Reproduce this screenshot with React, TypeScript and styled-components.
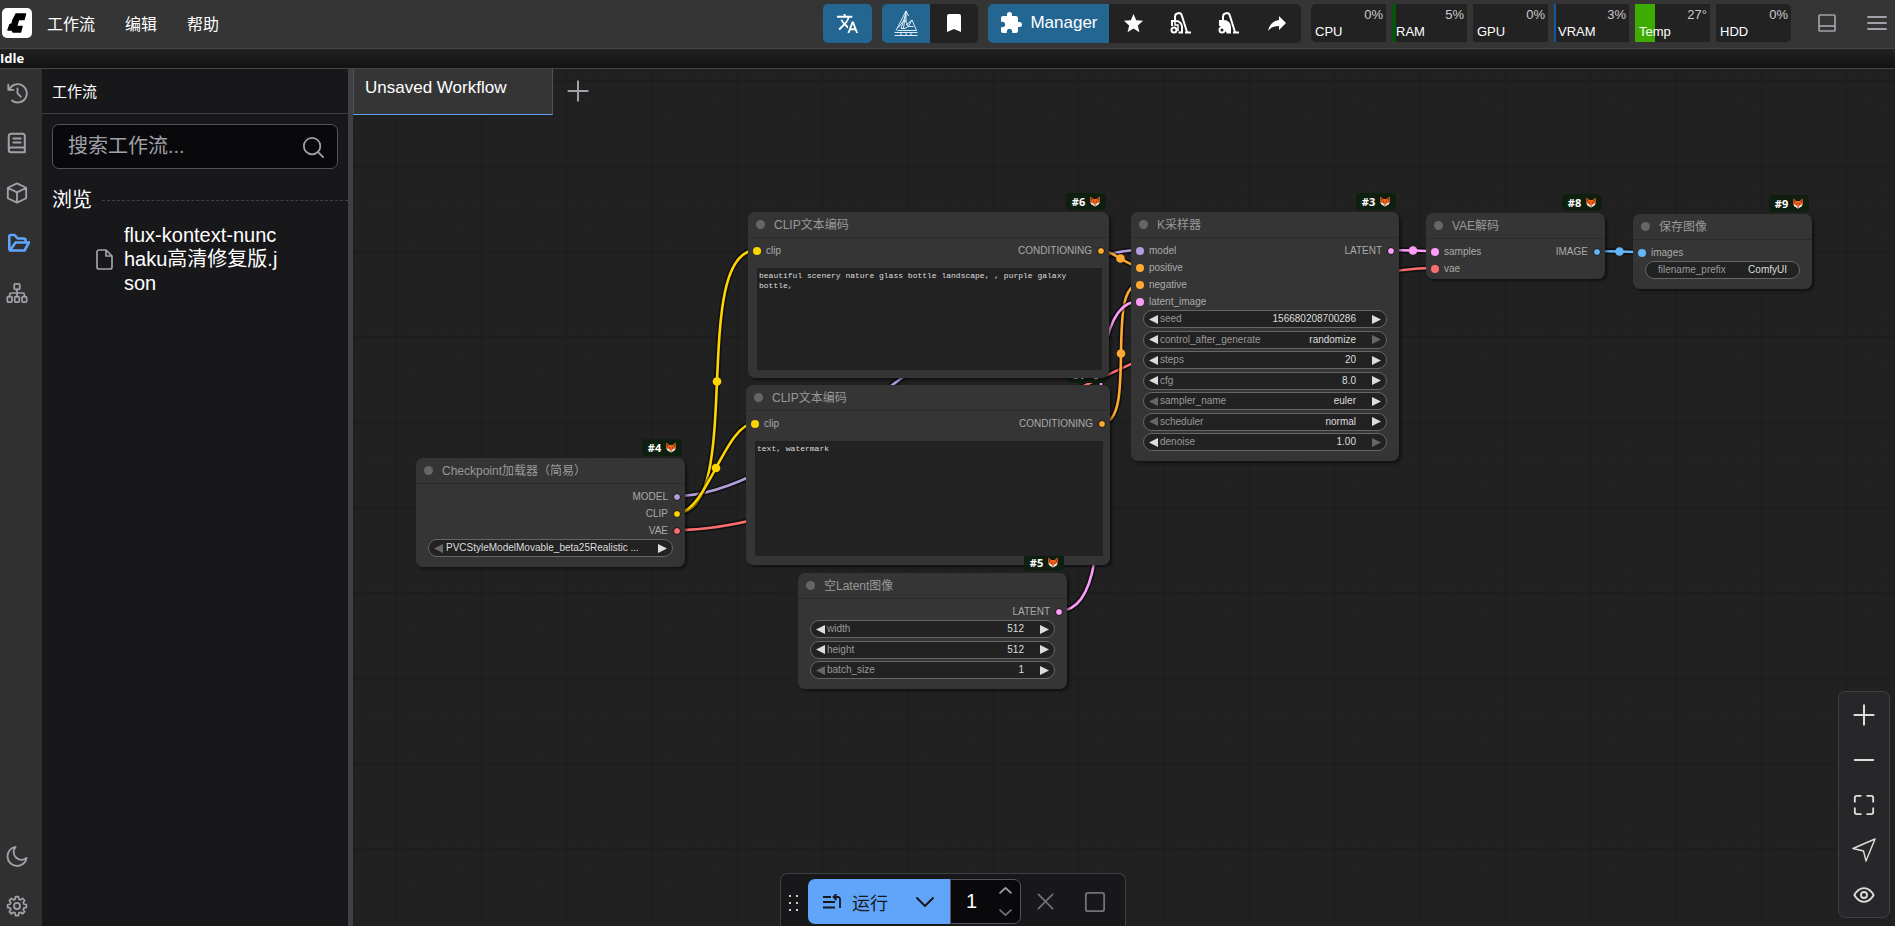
import React from 'react';
import styled, { createGlobalStyle } from 'styled-components';
import { MdTranslate, MdBookmark, MdExtension, MdStar } from 'react-icons/md';

const SANS = '"Liberation Sans", "Noto Sans CJK SC", sans-serif';

const GlobalStyle = createGlobalStyle`
  *, *::before, *::after { box-sizing: border-box; }
  body { margin: 0; background: #202020; color: #fff; font-family: ${SANS}; overflow: hidden; }
  button, input, select, textarea { font: inherit; color: inherit; margin: 0; padding: 0; border: 0; background: none; outline: none; border-radius: 0; }
  button { cursor: pointer; }
  svg { display: block; flex: none; }
`;

/* ---------- shell ---------- */

const Page = styled.div`
  display: flex;
  flex-direction: column;
  height: 100vh;
`;

const TopBar = styled.header`
  display: flex;
  align-items: center;
  flex: none;
  height: 49px;
  padding: 0 8px 6px 2px;
  background: #353535;
  border-bottom: 1px solid #454545;
`;

const Logo = styled.div`
  margin: 4px 0 0;
  border-radius: 5px;
  overflow: hidden;
`;

const MenuNav = styled.nav`
  display: flex;
  gap: 30px;
  margin: 7px auto 0 15px;
`;

const MenuButton = styled.button`
  font-size: 16px;
  line-height: 20px;
`;

const ButtonGroup = styled.div`
  display: flex;
  height: 39px;
  margin: 4px 10px 0 0;
  border-radius: 5px;
  overflow: hidden;
  background: #222;
`;

const BarButton = styled.button<{ $primary?: boolean; $width?: number }>`
  display: flex;
  align-items: center;
  justify-content: center;
  gap: 7px;
  width: ${(p) => p.$width ?? 48}px;
  background: ${(p) => (p.$primary ? '#236692' : 'transparent')};
  font-size: 17px;
`;

const Monitors = styled.div`
  display: flex;
  gap: 6px;
  margin: 3px 27px 0 0;
  border-radius: 5px;
  overflow: hidden;
`;

const Monitor = styled.div`
  position: relative;
  width: 75px;
  height: 38px;
  background: #222;
  font-size: 13px;
  line-height: 15px;
`;

const MonitorFill = styled.div<{ $color: string }>`
  height: 100%;
  background: ${(p) => p.$color};
`;

const MonitorValue = styled.span`
  position: absolute;
  top: 3px;
  right: 3px;
  color: #ccc;
`;

const MonitorLabel = styled.span`
  position: absolute;
  bottom: 3px;
  left: 4px;
`;

const IconButton = styled.button`
  display: flex;
  margin-top: 4px;
  color: #a1a1aa;
  & + & { margin-left: 31px; }
`;

const StatusBar = styled.div`
  flex: none;
  height: 20px;
  background: linear-gradient(#212121, #121212);
  border-bottom: 1px solid #454545;
  font: bold 13px/18px "Open Sans", "Noto Sans CJK SC", sans-serif;
`;

const Main = styled.main`
  display: flex;
  flex: 1;
  min-height: 0;
`;

/* ---------- left side ---------- */

const SideBar = styled.nav`
  display: flex;
  flex-direction: column;
  justify-content: space-between;
  flex: none;
  width: 42px;
  padding-top: 4px;
  background: #303030;
`;

const SideGroup = styled.div`
  display: flex;
  flex-direction: column;
  gap: 10px;
`;

const SideButton = styled.button<{ $active?: boolean }>`
  display: flex;
  align-items: center;
  width: 42px;
  height: 40px;
  padding-left: 6px;
  color: ${(p) => (p.$active ? '#60a5fa' : '#a1a1aa')};
`;

const Panel = styled.aside`
  flex: none;
  width: 311px;
  background: #18181b;
  border-right: 5px solid #3f3f46;
`;

const PanelTitle = styled.h2`
  margin: 0;
  height: 45px;
  padding-left: 10px;
  border-bottom: 1px solid #3f3f46;
  font-size: 15px;
  font-weight: 400;
  line-height: 46px;
`;

const SearchBox = styled.label`
  display: flex;
  align-items: center;
  height: 45px;
  margin: 10px 10px 0;
  padding: 0 13px 0 15px;
  border: 1px solid #52525b;
  border-radius: 7px;
  background: #09090b;
  color: #a1a1aa;
`;

const SearchInput = styled.input`
  flex: 1;
  min-width: 0;
  font-size: 20px;
  &::placeholder { color: #a1a1aa; opacity: 1; }
`;

const SectionTitle = styled.h3`
  display: flex;
  align-items: center;
  gap: 10px;
  margin: 17px 0 0 10px;
  font-size: 20px;
  font-weight: 400;
  line-height: 28px;
  &::after { content: ''; flex: 1; border-top: 1px dashed #3f3f46; }
`;

const FileLink = styled.a`
  display: flex;
  align-items: center;
  gap: 11px;
  margin: 9px 0 0 54px;
  color: #fff;
  font-size: 20px;
  line-height: 24px;
  text-decoration: none;
`;

const FileName = styled.span`
  width: 156px;
  word-break: break-all;
`;

/* ---------- canvas ---------- */

const Canvas = styled.section`
  position: relative;
  flex: 1;
  min-width: 0;
  overflow: hidden;
  background: #212121;
`;

const Layer = styled.svg`
  position: absolute;
  inset: 0;
  width: 100%;
  height: 100%;
`;

const TabBar = styled.div`
  position: relative;
  display: flex;
  align-items: center;
  gap: 14px;
`;

const Tab = styled.button`
  width: 200px;
  height: 46px;
  padding: 0 11px 7px;
  background: #353535;
  border: 1px solid #52525b;
  border-top: 0;
  border-bottom-color: #60a5fa;
  font-size: 17px;
  text-align: left;
`;

const AddTab = styled.button`
  padding-bottom: 2px;
  color: #a1a1aa;
`;

const NodeFrame = styled.article<{ $x: number; $y: number; $w: number; $pad: number }>`
  position: absolute;
  left: ${(p) => p.$x}px;
  top: ${(p) => p.$y}px;
  width: ${(p) => p.$w}px;
  padding-bottom: ${(p) => p.$pad}px;
  border-radius: 7px;
  background: #353535;
  box-shadow: 2px 2px 3px rgba(0, 0, 0, 0.5);
`;

const NodeTitle = styled.h4`
  display: flex;
  align-items: center;
  gap: 9px;
  margin: 0;
  height: 26px;
  padding-left: 8px;
  border-bottom: 1px solid #2c2c2c;
  color: #999;
  font-size: 12px;
  font-weight: 400;
  line-height: 18px;
  &::before { content: ''; width: 9px; height: 9px; border-radius: 50%; background: #666; }
`;

const Badge = styled.span`
  position: absolute;
  right: 3px;
  top: -19px;
  display: flex;
  align-items: center;
  justify-content: center;
  gap: 5px;
  width: 40px;
  height: 17px;
  border-radius: 4px;
  background: #0f1f0f;
  color: #fff;
  font: 700 11px/16px "Open Sans", "Noto Sans CJK SC", sans-serif;
`;

const Slots = styled.div`
  display: flex;
  justify-content: space-between;
  padding: 4px 4px 0 5px;
`;

const SlotColumn = styled.div`
  display: flex;
  flex-direction: column;
`;

const Slot = styled.div<{ $color: string; $out?: boolean }>`
  display: flex;
  flex-direction: ${(p) => (p.$out ? 'row-reverse' : 'row')};
  align-items: center;
  gap: 5px;
  height: 17px;
  color: #aaa;
  font-size: 10px;
  line-height: 17px;
  &::before {
    content: '';
    width: 8px;
    height: 8px;
    border: ${(p) => (p.$out ? 1 : 0)}px solid #111;
    border-radius: 50%;
    background: ${(p) => p.$color};
  }
`;

const Prompt = styled.textarea<{ $h: number }>`
  position: relative;
  z-index: 1;
  display: block;
  width: calc(100% - 16px);
  height: ${(p) => p.$h}px;
  margin: 9px 0 0 9px;
  padding: 3px 2px 2px;
  background: #222;
  color: #ddd;
  font: 8px/10px "Liberation Mono", "Noto Sans CJK SC", monospace;
  resize: none;
`;

const WidgetList = styled.div<{ $h: number }>`
  display: flex;
  flex-direction: column;
  justify-content: space-between;
  height: ${(p) => p.$h}px;
  margin: 0 12px;
`;

const WidgetRow = styled.div<{ $plain?: boolean }>`
  display: flex;
  align-items: center;
  height: 18px;
  padding: 0 ${(p) => (p.$plain ? 12 : 5)}px;
  border: 1px solid #666;
  border-radius: 9px;
  background: #222;
  color: #ddd;
  font-size: 10px;
  line-height: 16px;
`;

const WidgetLabel = styled.label<{ $plain?: boolean }>`
  margin-left: ${(p) => (p.$plain ? 0 : 2)}px;
  color: #999;
`;

const WidgetInput = styled.input<{ $plain?: boolean }>`
  flex: 1;
  width: 0;
  margin-right: ${(p) => (p.$plain ? 0 : 16)}px;
  text-align: right;
`;

const WidgetSelect = styled.select<{ $left?: boolean }>`
  appearance: none;
  flex: 1;
  width: 0;
  margin: 0 ${(p) => (p.$left ? 3 : 16)}px 0 3px;
  text-align-last: ${(p) => (p.$left ? 'left' : 'right')};
  option { background: #222; }
`;

const Arrow = styled.button<{ $off?: boolean }>`
  color: ${(p) => (p.$off ? '#666' : '#ddd')};
`;

const CanvasMenu = styled.div`
  position: absolute;
  right: 5px;
  bottom: 8px;
  display: flex;
  flex-direction: column;
  width: 52px;
  border: 1px solid #3f3f46;
  border-radius: 7px;
  background: #27272a;
`;

const CanvasMenuButton = styled.button`
  display: flex;
  align-items: center;
  justify-content: center;
  height: 45px;
  color: #ddd;
`;

const ActionBar = styled.div`
  position: absolute;
  left: 427px;
  bottom: 0;
  display: flex;
  padding: 5px 6px 2px 8px;
  border: 1px solid #3f3f46;
  border-bottom: 0;
  border-radius: 7px 7px 0 0;
  background: #18181b;
`;

const DragHandle = styled.div`
  display: flex;
  align-items: center;
  width: 19px;
  padding-top: 3px;
`;

const RunButton = styled.button`
  display: flex;
  align-items: center;
  gap: 11px;
  width: 92px;
  height: 45px;
  padding-left: 15px;
  border-radius: 7px 0 0 7px;
  background: #60a5fa;
  color: #18181b;
  font-size: 18px;
`;

const RunMenuButton = styled.button`
  display: flex;
  align-items: center;
  justify-content: center;
  width: 50px;
  background: #60a5fa;
  color: #18181b;
`;

const Batch = styled.div`
  display: flex;
  width: 71px;
  border: 1px solid #52525b;
  border-radius: 0 7px 7px 0;
  background: #09090b;
`;

const BatchInput = styled.input`
  width: 41px;
  font-size: 20px;
  text-align: center;
`;

const Spinner = styled.div`
  display: flex;
  flex-direction: column;
  width: 26px;
`;

const SpinButton = styled.button<{ $dim?: boolean }>`
  display: flex;
  flex: 1;
  align-items: center;
  justify-content: center;
  color: ${(p) => (p.$dim ? '#71717a' : '#a1a1aa')};
`;

const ToolButton = styled.button`
  display: flex;
  align-items: center;
  justify-content: center;
  width: 49px;
  color: #71717a;
`;

/* ---------- icons ---------- */

const Stroke = ({ d, size = 22, w = 2, children }: { d?: string; size?: number; w?: number; children?: React.ReactNode }) => (
  <svg width={size} height={size} viewBox="0 0 24 24" fill="none" stroke="currentColor" strokeWidth={w} strokeLinecap="round" strokeLinejoin="round">
    {d && <path d={d} />}
    {children}
  </svg>
);

const HistoryIcon = () => <Stroke d="M2.5 3v5.5H8M3.6 8.2A10 10 0 1 1 6.5 20.2M12.5 7v5.4l3.6 3.6" />;
const BookIcon = () => <Stroke w={2.2} d="M20.5 17.5V4a2 2 0 0 0-2-2h-13A2.5 2.5 0 0 0 3 4.5v15A2.5 2.5 0 0 0 5.5 22h15v-5M3 19.5A2.5 2.5 0 0 1 5.5 17h15M8 7h8M8 11.5h8" />;
const CubeIcon = () => <Stroke d="M12 1.5 22 6.3v11.4l-10 4.8-10-4.800V6.3zM2.3 6.6 12 11.3l9.7-4.7M12 11.3v11" />;
const FolderIcon = () => (
  <svg width={24} height={24} viewBox="0 0 24 24" fill="none" stroke="currentColor" strokeWidth={2.6} strokeLinejoin="round">
    <path d="M4 19.5 3.3 18V5.3A1.3 1.3 0 0 1 4.600 4h4l3 3.5h6a2 2 0 0 1 2 2v1.800M4 19.5h14.5L23 11.5H9.5z" />
  </svg>
);
const SitemapIcon = () => (
  <Stroke w={1.9}>
    <rect x="9" y="2" width="6" height="6" rx="1" />
    <rect x="1.5" y="16" width="5" height="6" rx="1" />
    <rect x="9.5" y="16" width="5" height="6" rx="1" />
    <rect x="17.5" y="16" width="5" height="6" rx="1" />
    <path d="M12 8v8M4 16v-2.5A1.5 1.5 0 0 1 5.5 12h13a1.5 1.5 0 0 1 1.5 1.5V16" />
  </Stroke>
);
const MoonIcon = () => <Stroke d="M10.5 2A10.5 10.5 0 1 0 22.500 14 8.500 8.500 0 0 1 10.5 2z" />;
const GearIcon = () => (
  <Stroke w={1.9}>
    <circle cx="12" cy="12" r="3.3" />
    <path d="M10 4.5 10.4 1.8h3.2l.4 2.7 1.9.8 2.2-1.6 2.3 2.3-1.6 2.2.8 1.9 2.6.4v3.2l-2.6.4-.8 1.9 1.6 2.2-2.3 2.3-2.2-1.6-1.9.8-.4 2.7h-3.2l-.4-2.7-1.9-.8-2.2 1.6-2.3-2.3 1.6-2.2-.8-1.900-2.6-.4v-3.2l2.6-.4.8-1.900-1.6-2.2 2.3-2.3 2.2 1.6z" />
  </Stroke>
);
const FileIcon = () => (
  <svg width={17} height={21} viewBox="0 0 17 21" fill="none" stroke="#a1a1aa" strokeWidth="1.700" strokeLinejoin="round">
    <path d="M10 1H3a2 2 0 0 0-2 2v15a2 2 0 0 0 2 2h11a2 2 0 0 0 2-2V7zM10 1v6h6" />
  </svg>
);
const PlusIcon = () => <Stroke d="M12 1.5v21M1.5 12h21" w={2.2} />;

const VacuumIcon = ({ solid }: { solid?: boolean }) => (
  <svg width={24} height={24} viewBox="0 0 24 24" fill="none" stroke="currentColor" strokeWidth="2">
    <path d="M6 9V5.5a3.500 3.500 0 0 1 6.900-.7L18 21M16 21.500h6" />
    <path d="M3 15v-5h4a6 6 0 0 1 6 6v5.500H9.5" fill={solid ? 'currentColor' : 'none'} />
    <circle cx="5" cy="19" r="2.500" fill={solid ? '#222' : 'none'} />
    {!solid && <path d="M6 10v4h3v6" strokeWidth="1.500" />}
  </svg>
);

const SketchIcon = () => (
  <svg width={24} height={26} viewBox="0 0 24 26" fill="none" stroke="#dcebf5" strokeWidth="1">
    <path d="M2 20.5 12 1l2.5 5M12 1 9.5 18M12 1v11M12 3 7 18.5h4l4-3M4.5 17.5l6-8M3.5 20.5h19M22.5 20.5 18 10l-4 7M18 10l-6 5M10.5 9.5l4 7h5M.5 22.5h23M.5 25.5h23M7 22.5v3M12 22.5v3M17 22.5v3" />
  </svg>
);

const FoxIcon = () => (
  <svg width={10} height={11} viewBox="0 0 20 20">
    <path d="M1 0 6.500 5h7L19 0l1 9-4 6-6 5-6-5-4-6z" fill="#f0641e" />
    <path d="M2.500 3 5 6 2.500 9zM17.500 3 15 6l2.500 3z" fill="#5c2413" />
    <path d="M0 11l5 2 5 4 5-4 5-2-3 5-7 4-7-4z" fill="#f5ede8" />
    <path d="M5 9l4 2-2 1.200zM15 9l-4 2 2 1.200zM8.500 16.500h3L10 19z" fill="#241a1a" />
  </svg>
);

const Triangle = ({ left }: { left?: boolean }) => (
  <svg width={9} height={9} viewBox="0 0 9 9" fill="currentColor">
    <path d={left ? 'M9 0v9L0 4.5z' : 'M0 0v9l9-4.500z'} />
  </svg>
);

/* ---------- data ---------- */

const COLORS = {
  MODEL: '#B39DDB', CLIP: '#FFD500', VAE: '#FF6E6E', CONDITIONING: '#FFA931', LATENT: '#FF9CF9', IMAGE: '#64B5F6',
};
type Kind = keyof typeof COLORS;

interface Widget { name: string; value: string; type?: 'combo' | 'text' | 'file'; atMin?: boolean; atMax?: boolean }
interface NodeSpec {
  id: number; title: string; x: number; y: number; w: number; pad: number;
  inputs: [string, Kind][]; outputs: Kind[];
  prompt?: { text: string; height: number }; widgets?: Widget[]; widgetsHeight?: number;
}

const NODES: NodeSpec[] = [
  {
    id: 4, title: 'Checkpoint加载器（简易）', x: 63, y: 389, w: 269, pad: 10, inputs: [], outputs: ['MODEL', 'CLIP', 'VAE'],
    widgets: [{ name: 'ckpt_name', value: 'PVCStyleModelMovable_beta25Realistic ...', type: 'file', atMin: true }], widgetsHeight: 18,
  },
  {
    id: 7, title: 'CLIP文本编码', x: 393, y: 316, w: 364, pad: 9, inputs: [['clip', 'CLIP']], outputs: ['CONDITIONING'],
    prompt: { text: 'text, watermark', height: 115 },
  },
  {
    id: 6, title: 'CLIP文本编码', x: 395, y: 143, w: 361, pad: 8, inputs: [['clip', 'CLIP']], outputs: ['CONDITIONING'],
    prompt: { text: 'beautiful scenery nature glass bottle landscape, , purple galaxy bottle,', height: 102 },
  },
  {
    id: 5, title: '空Latent图像', x: 445, y: 504, w: 269, pad: 10, inputs: [], outputs: ['LATENT'],
    widgets: [{ name: 'width', value: '512' }, { name: 'height', value: '512' }, { name: 'batch_size', value: '1', atMin: true }], widgetsHeight: 59,
  },
  {
    id: 3, title: 'K采样器', x: 778, y: 143, w: 268, pad: 10,
    inputs: [['model', 'MODEL'], ['positive', 'CONDITIONING'], ['negative', 'CONDITIONING'], ['latent_image', 'LATENT']], outputs: ['LATENT'],
    widgets: [
      { name: 'seed', value: '156680208700286' },
      { name: 'control_after_generate', value: 'randomize', type: 'combo', atMax: true },
      { name: 'steps', value: '20' },
      { name: 'cfg', value: '8.0' },
      { name: 'sampler_name', value: 'euler', type: 'combo', atMin: true },
      { name: 'scheduler', value: 'normal', type: 'combo', atMin: true },
      { name: 'denoise', value: '1.00', atMax: true },
    ],
    widgetsHeight: 141,
  },
  { id: 8, title: 'VAE解码', x: 1073, y: 144, w: 179, pad: 2, inputs: [['samples', 'LATENT'], ['vae', 'VAE']], outputs: ['IMAGE'] },
  {
    id: 9, title: '保存图像', x: 1280, y: 145, w: 179, pad: 10, inputs: [['images', 'IMAGE']], outputs: [],
    widgets: [{ name: 'filename_prefix', value: 'ComfyUI', type: 'text' }], widgetsHeight: 18,
  },
];

/* from node, output index, to node, input index */
const LINKS: [number, number, number, number][] = [
  [4, 0, 3, 0], [4, 1, 6, 0], [4, 1, 7, 0], [4, 2, 8, 1], [6, 0, 3, 1], [7, 0, 3, 2], [5, 0, 3, 3], [3, 0, 8, 0], [8, 0, 9, 0],
];

const MONITORS = [
  { label: 'CPU', value: '0%', fill: 0, color: '#0aa' },
  { label: 'RAM', value: '5%', fill: 5, color: '#07520d' },
  { label: 'GPU', value: '0%', fill: 0, color: '#0c86f4' },
  { label: 'VRAM', value: '3%', fill: 3, color: '#12599f' },
  { label: 'Temp', value: '27°', fill: 27, color: '#3eab00' },
  { label: 'HDD', value: '0%', fill: 0, color: '#730f92' },
];

const nodeById = (id: number) => NODES.find((n) => n.id === id)!;

const Links = () => (
  <Layer aria-hidden="true">
    <defs>
      <pattern id="grid" width="100" height="100" patternUnits="userSpaceOnUse" patternTransform="translate(42 11) scale(0.8533)">
        <path d="M10.5 0v100M20.5 0v100M30.5 0v100M40.5 0v100M50.5 0v100M60.5 0v100M70.5 0v100M80.5 0v100M90.5 0v100M0 10.5h100M0 20.5h100M0 30.5h100M0 40.5h100M0 50.5h100M0 60.5h100M0 70.5h100M0 80.5h100M0 90.5h100" stroke="#1e1e1e" strokeWidth="1" />
        <path d="M1 0v100M0 1h100" stroke="#1c1c1c" strokeWidth="1.6" />
      </pattern>
    </defs>
    <rect width="100%" height="100%" fill="url(#grid)" />
    {LINKS.map(([from, out, to, input]) => {
      const a = nodeById(from);
      const b = nodeById(to);
      const x1 = a.x + a.w - 8;
      const y1 = a.y + 38 + out * 17;
      const x2 = b.x + 9;
      const y2 = b.y + 38 + input * 17;
      const pull = Math.hypot(x2 - x1, y2 - y1) / 4;
      const d = `M${x1} ${y1}C${x1 + pull} ${y1} ${x2 - pull} ${y2} ${x2} ${y2}`;
      const color = COLORS[a.outputs[out]];
      return (
        <g key={`${from}-${out}-${to}-${input}`} fill="none">
          <path d={d} stroke="rgba(0,0,0,.5)" strokeWidth="6" />
          <path d={d} stroke={color} strokeWidth="2.6" />
          <circle cx={(x1 + x2) / 2} cy={(y1 + y2) / 2} r="4.3" fill={color} />
        </g>
      );
    })}
  </Layer>
);

const WidgetView = ({ nodeId, widget }: { nodeId: number; widget: Widget }) => {
  const id = `${nodeId}-${widget.name}`;
  if (widget.type === 'text') {
    return (
      <WidgetRow $plain>
        <WidgetLabel $plain htmlFor={id}>{widget.name}</WidgetLabel>
        <WidgetInput id={id} $plain defaultValue={widget.value} />
      </WidgetRow>
    );
  }
  return (
    <WidgetRow>
      <Arrow $off={widget.atMin} aria-label={`${widget.name} −`}><Triangle left /></Arrow>
      {widget.type !== 'file' && <WidgetLabel htmlFor={id}>{widget.name}</WidgetLabel>}
      {widget.type ? (
        <WidgetSelect id={id} aria-label={widget.name} $left={widget.type === 'file'} defaultValue={widget.value}>
          <option>{widget.value}</option>
        </WidgetSelect>
      ) : (
        <WidgetInput id={id} defaultValue={widget.value} />
      )}
      <Arrow $off={widget.atMax} aria-label={`${widget.name} +`}><Triangle /></Arrow>
    </WidgetRow>
  );
};

const NodeView = ({ node }: { node: NodeSpec }) => (
  <NodeFrame $x={node.x} $y={node.y} $w={node.w} $pad={node.pad}>
    <Badge>#{node.id}<FoxIcon /></Badge>
    <NodeTitle>{node.title}</NodeTitle>
    <Slots>
      <SlotColumn>
        {node.inputs.map(([name, kind]) => <Slot key={name} $color={COLORS[kind]}>{name}</Slot>)}
      </SlotColumn>
      <SlotColumn>
        {node.outputs.map((kind) => <Slot key={kind} $out $color={COLORS[kind]}>{kind}</Slot>)}
      </SlotColumn>
    </Slots>
    {node.prompt && <Prompt $h={node.prompt.height} aria-label={node.title} spellCheck={false} defaultValue={node.prompt.text} />}
    {node.widgets && (
      <WidgetList $h={node.widgetsHeight ?? 18}>
        {node.widgets.map((w) => <WidgetView key={w.name} nodeId={node.id} widget={w} />)}
      </WidgetList>
    )}
  </NodeFrame>
);

const Header = () => (
  <TopBar>
    <Logo>
      <svg width={30} height={30} viewBox="0 0 30 30">
        <rect width="30" height="30" fill="#fff" />
        <path d="M14 6h9.5l-1.600 5.500h-5.400L14.5 18.500h5.500L18.5 24H11l-1-2H6l2-5.500 2-.5 1-4z" fill="#000" stroke="#000" strokeWidth="1.5" strokeLinejoin="round" />
      </svg>
    </Logo>
    <MenuNav>
      <MenuButton>工作流</MenuButton>
      <MenuButton>编辑</MenuButton>
      <MenuButton>帮助</MenuButton>
    </MenuNav>
    <ButtonGroup>
      <BarButton $primary $width={49} aria-label="翻译"><MdTranslate size={23} /></BarButton>
    </ButtonGroup>
    <ButtonGroup>
      <BarButton $primary aria-label="Sketch"><SketchIcon /></BarButton>
      <BarButton aria-label="Bookmark"><MdBookmark size={24} /></BarButton>
    </ButtonGroup>
    <ButtonGroup>
      <BarButton $primary $width={121}><MdExtension size={24} />Manager</BarButton>
      <BarButton aria-label="Star"><MdStar size={23} /></BarButton>
      <BarButton aria-label="Unload models"><VacuumIcon /></BarButton>
      <BarButton aria-label="Free memory"><VacuumIcon solid /></BarButton>
      <BarButton aria-label="Share">
        <svg width={24} height={24} viewBox="0 0 24 24" fill="currentColor">
          <path d="M21 12l-7-7v4C7 10 4 15 3 20c2.5-3.500 6-5.100 11-5.100V19z" />
        </svg>
      </BarButton>
    </ButtonGroup>
    <Monitors>
      {MONITORS.map((m) => (
        <Monitor key={m.label}>
          <MonitorFill $color={m.color} style={{ width: `${m.fill}%` }} />
          <MonitorValue>{m.value}</MonitorValue>
          <MonitorLabel>{m.label}</MonitorLabel>
        </Monitor>
      ))}
    </Monitors>
    <IconButton aria-label="Toggle bottom panel">
      <svg width={18} height={18} viewBox="0 0 18 18" fill="none" stroke="currentColor" strokeWidth="1.700">
        <rect x="1" y="1" width="16" height="16" rx="1" />
        <path d="M1 12h16" />
      </svg>
    </IconButton>
    <IconButton aria-label="Menu">
      <svg width={20} height={16} viewBox="0 0 20 16" stroke="currentColor" strokeWidth="1.900" strokeLinecap="round">
        <path d="M1 2h18M1 8h18M1 14h18" />
      </svg>
    </IconButton>
  </TopBar>
);

export default function App() {
  return (
    <Page>
      <GlobalStyle />
      <Header />
      <StatusBar>Idle</StatusBar>
      <Main>
        <SideBar>
          <SideGroup>
            <SideButton aria-label="历史"><HistoryIcon /></SideButton>
            <SideButton aria-label="节点库"><BookIcon /></SideButton>
            <SideButton aria-label="模型库"><CubeIcon /></SideButton>
            <SideButton $active aria-label="工作流"><FolderIcon /></SideButton>
            <SideButton aria-label="节点图"><SitemapIcon /></SideButton>
          </SideGroup>
          <SideGroup>
            <SideButton aria-label="主题"><MoonIcon /></SideButton>
            <SideButton aria-label="设置"><GearIcon /></SideButton>
          </SideGroup>
        </SideBar>
        <Panel>
          <PanelTitle>工作流</PanelTitle>
          <SearchBox>
            <SearchInput placeholder="搜索工作流..." />
            <Stroke w={1.9}><circle cx="11" cy="11" r="9" /><path d="M17.5 17.5 23 23" /></Stroke>
          </SearchBox>
          <SectionTitle>浏览</SectionTitle>
          <FileLink href="#workflow">
            <FileIcon />
            <FileName>flux-kontext-nunchaku高清修复版.json</FileName>
          </FileLink>
        </Panel>
        <Canvas>
          <Links />
          <TabBar>
            <Tab>Unsaved Workflow</Tab>
            <AddTab aria-label="新建"><PlusIcon /></AddTab>
          </TabBar>
          {NODES.map((n) => <NodeView key={n.id} node={n} />)}
          <CanvasMenu>
            <CanvasMenuButton aria-label="放大"><PlusIcon /></CanvasMenuButton>
            <CanvasMenuButton aria-label="缩小"><Stroke d="M2 12h20" w={2.2} /></CanvasMenuButton>
            <CanvasMenuButton aria-label="适应视图">
              <Stroke d="M8.500 2H4a2 2 0 0 0-2 2v4.500M15.500 2H20a2 2 0 0 1 2 2v4.500M2 15.500V20a2 2 0 0 0 2 2h4.500M22 15.500V20a2 2 0 0 1-2 2h-4.500" />
            </CanvasMenuButton>
            <CanvasMenuButton aria-label="平移">
              <Stroke d="M23 1 1 10.500l10.500 2.500L14 23z" size={24} w={1.4} />
            </CanvasMenuButton>
            <CanvasMenuButton aria-label="显示连线">
              <Stroke d="M1.500 12S5 4.500 12 4.500 22.500 12 22.500 12 19 19.500 12 19.500 1.500 12 1.500 12z"><circle cx="12" cy="12" r="3.300" /></Stroke>
            </CanvasMenuButton>
          </CanvasMenu>
          <ActionBar>
            <DragHandle>
              <svg width={10} height={16} viewBox="0 0 10 16" fill="#ccc">
                <path d="M0 0h2v2H0zM7 0h2v2H7zM0 7h2v2H0zM7 7h2v2H7zM0 14h2v2H0zM7 14h2v2H7z" />
              </svg>
            </DragHandle>
            <RunButton>
              <svg width={18} height={16} viewBox="0 0 18 16" fill="none" stroke="currentColor" strokeWidth="1.800">
                <path d="M0 3h8M0 8h12M0 13.500h12M17 14V5a2 2 0 0 0-2-2h-4M13.500 0l-3 3 3 3" />
              </svg>
              运行
            </RunButton>
            <RunMenuButton aria-label="运行选项">
              <svg width={18} height={12} viewBox="0 0 18 12" fill="none" stroke="currentColor" strokeWidth="2" strokeLinecap="round" strokeLinejoin="round">
                <path d="M1 2l8 8 8-8" />
              </svg>
            </RunMenuButton>
            <Batch>
              <BatchInput aria-label="批次数" defaultValue="1" />
              <Spinner>
                <SpinButton aria-label="+"><Stroke d="M2 16.500 12 7l10 9.500" size={13} w={3.2} /></SpinButton>
                <SpinButton $dim aria-label="−"><Stroke d="M2 7.500 12 17l10-9.500" size={13} w={3.2} /></SpinButton>
              </Spinner>
            </Batch>
            <ToolButton aria-label="取消"><Stroke d="M2 2l20 20M22 2 2 22" size={17} w={2.4} /></ToolButton>
            <ToolButton aria-label="清空"><Stroke><rect x="2" y="2" width="20" height="20" rx="2.500" /></Stroke></ToolButton>
          </ActionBar>
        </Canvas>
      </Main>
    </Page>
  );
}
